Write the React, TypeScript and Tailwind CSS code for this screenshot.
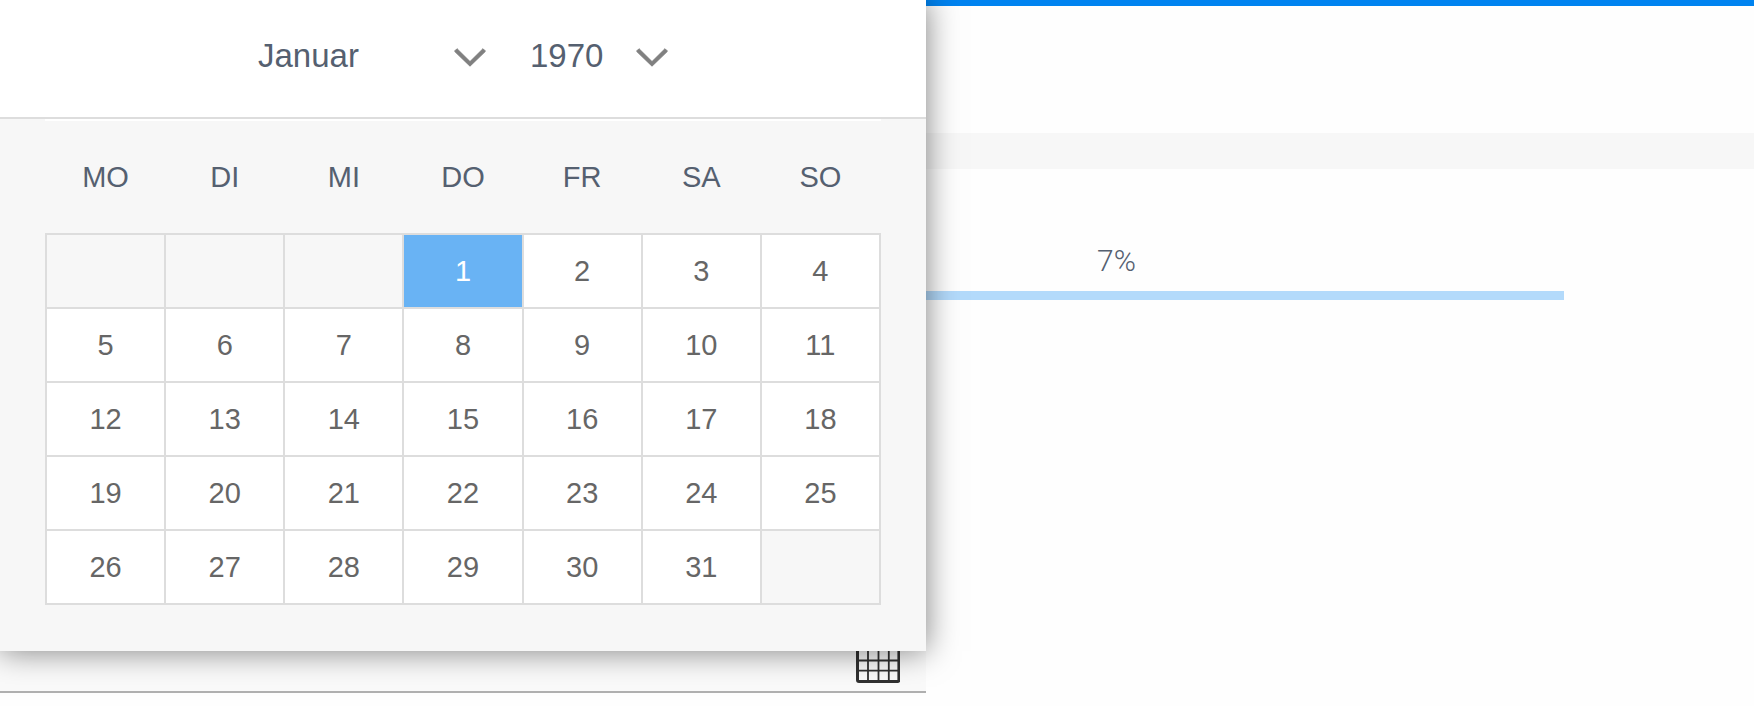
import React, { useState } from "react";

const WEEKDAYS = ["MO", "DI", "MI", "DO", "FR", "SA", "SO"];

const MONTHS = [
  "Januar",
  "Februar",
  "März",
  "April",
  "Mai",
  "Juni",
  "Juli",
  "August",
  "September",
  "Oktober",
  "November",
  "Dezember",
];

const YEARS = [1970, 1971, 1972, 1973, 1974, 1975];

// Weeks start on monday, null is a cell outside of the month
const getWeeks = (year: number, month: number) => {
  const offset = (new Date(year, month, 1).getDay() + 6) % 7;
  const days = new Date(year, month + 1, 0).getDate();
  const rows = Math.ceil((offset + days) / 7);

  return Array.from({ length: rows }, (_, row) =>
    WEEKDAYS.map((_, col) => {
      const day = row * 7 + col - offset + 1;
      return day > 0 && day <= days ? day : null;
    }),
  );
};

const Chevron: React.FC = () => (
  <svg
    viewBox="0 0 32 20"
    className="pointer-events-none h-5 w-8 shrink-0"
    fill="#808080"
    stroke="#808080"
    strokeWidth="1"
    strokeLinejoin="round"
  >
    <path d="M0.500 4.200 3 1.700 16 14.600 29 1.700 31.500 4.200 16 19.200Z" />
  </svg>
);

const CalendarIcon: React.FC = () => (
  <svg viewBox="0 0 44 44" className="h-11 w-11" fill="none" stroke="#303030">
    <rect x="1.5" y="1.5" width="41.4" height="41" rx="1.5" strokeWidth="3" />
    <path
      d="M12 2v40M22.5 2v40M32.8 2v40M2 11h40M2 21.5h40M2 31.7h40"
      strokeWidth="1.8"
    />
  </svg>
);

const DatePicker: React.FC = () => {
  const [month, setMonth] = useState(0);
  const [year, setYear] = useState(1970);
  const [selected, setSelected] = useState(1);

  return (
    <div className="absolute inset-x-0 top-0 bg-[#f7f7f7] pb-[46px] shadow-[0_0_30px_rgba(0,0,0,0.5)]">
      <div className="flex h-[119px] justify-center gap-11 border-b-2 border-[#dddddd] bg-white pb-1 text-[33px] text-[#556070]">
        <div className="flex items-center">
          <select
            aria-label="Monat"
            value={month}
            onChange={(e) => setMonth(Number(e.target.value))}
            className="w-[196px] appearance-none bg-transparent pb-0.5 outline-none"
          >
            {MONTHS.map((name, i) => (
              <option key={name} value={i}>
                {name}
              </option>
            ))}
          </select>
          <Chevron />
        </div>
        <div className="flex items-center">
          <select
            aria-label="Jahr"
            value={year}
            onChange={(e) => setYear(Number(e.target.value))}
            className="w-[106px] appearance-none bg-transparent pb-0.5 outline-none"
          >
            {YEARS.map((y) => (
              <option key={y} value={y}>
                {y}
              </option>
            ))}
          </select>
          <Chevron />
        </div>
      </div>

      <div className="mx-[45px] border-t-2 border-white">
        <table className="w-full table-fixed border-collapse text-center text-[29px]">
          <thead>
            <tr className="h-[113px] text-[#556070]">
              {WEEKDAYS.map((name) => (
                <th key={name} scope="col" className="p-0 pt-0.5 font-normal">
                  {name}
                </th>
              ))}
            </tr>
          </thead>
          <tbody className="text-[#666666]">
            {getWeeks(year, month).map((week, row) => (
              <tr key={row} className="h-[74px]">
                {week.map((day, col) => (
                  <td key={col} className="border-2 border-[#dddddd] p-0">
                    {day && (
                      <button
                        type="button"
                        onClick={() => setSelected(day)}
                        className={`block h-[72px] w-full pt-0.5 ${
                          day === selected
                            ? "bg-[#69b3f4] text-white"
                            : "bg-white"
                        }`}
                      >
                        {day}
                      </button>
                    )}
                  </td>
                ))}
              </tr>
            ))}
          </tbody>
        </table>
      </div>
    </div>
  );
};

const App: React.FC = () => {
  return (
    <div className="relative min-h-screen overflow-hidden bg-[#fefefe] font-['Liberation_Sans',Arial,sans-serif]">
      <div className="h-1.5 bg-[#0083f0]" />
      <div className="mt-[127px] h-9 bg-[#f7f7f7]" />

      {/* Progress */}
      <div className="mr-[190px] pt-[70px]">
        <p className="pl-[669px] text-center font-['Roboto',sans-serif] text-[30px] leading-[44px] font-light text-[#556070]">
          7%
        </p>
        <div className="mt-2 h-[9px] bg-[#b3dafb]" />
      </div>

      {/* Date field with the open picker on top */}
      <div className="absolute top-0 left-0 flex h-[693px] w-[926px] flex-col justify-end">
        <div className="flex h-20 items-end justify-end border-b-2 border-[#b0b0b0] bg-[#fafafa] pr-[26px] pb-2">
          <button type="button" aria-label="Kalender">
            <CalendarIcon />
          </button>
        </div>
        <DatePicker />
      </div>
    </div>
  );
};

export default App;
